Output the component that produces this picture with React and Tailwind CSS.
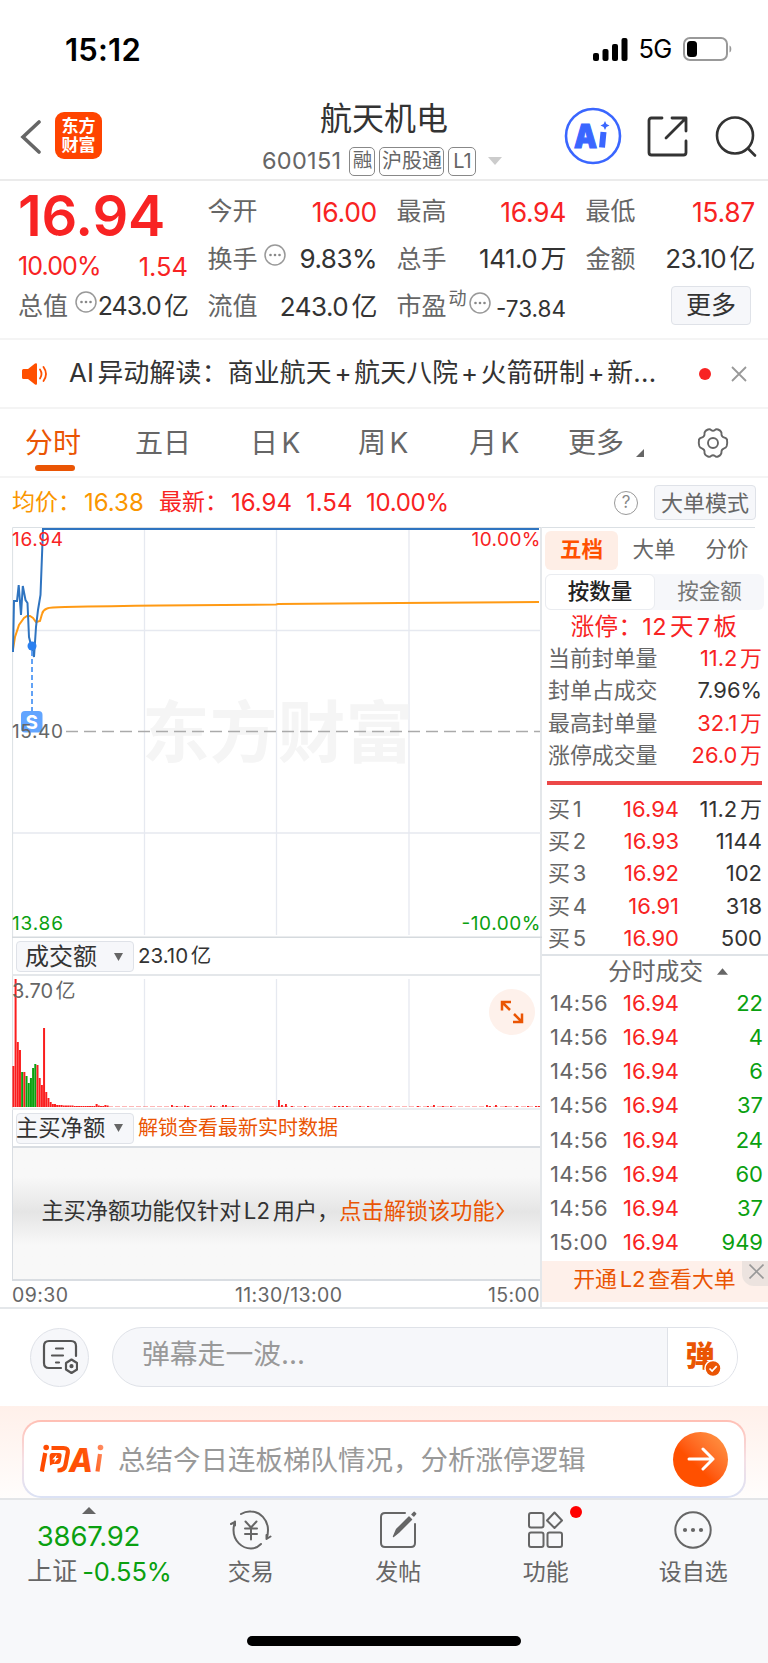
import React from "react";

const quoteColumns = [
    [
        { label: "今开", value: "16.00", red: true },
        { label: "换手", value: "9.83%", info: true },
        { label: "流值", value: "243.0亿" },
    ],
    [
        { label: "最高", value: "16.94", red: true },
        { label: "总手", value: "141.0万" },
        { label: "市盈", value: "-73.84", info: true, sup: "动" },
    ],
    [
        { label: "最低", value: "15.87", red: true },
        { label: "金额", value: "23.10亿" },
    ],
];

const limitStats = [
    { label: "当前封单量", value: "11.2万", red: true },
    { label: "封单占成交", value: "7.96%" },
    { label: "最高封单量", value: "32.1万", red: true },
    { label: "涨停成交量", value: "26.0万", red: true },
];

const bids = [
    { level: "买1", price: "16.94", qty: "11.2万" },
    { level: "买2", price: "16.93", qty: "1144" },
    { level: "买3", price: "16.92", qty: "102" },
    { level: "买4", price: "16.91", qty: "318" },
    { level: "买5", price: "16.90", qty: "500" },
];

const ticks = [
    { time: "14:56", qty: 22 },
    { time: "14:56", qty: 4 },
    { time: "14:56", qty: 6 },
    { time: "14:56", qty: 37 },
    { time: "14:56", qty: 24 },
    { time: "14:56", qty: 60 },
    { time: "14:56", qty: 37 },
    { time: "15:00", qty: 949 },
];

const newsTopics = ["AI异动解读：商业航天", "航天八院", "火箭研制", "新..."];

// opening minutes: [height, isDown]
const volumes = [
    [41], [128], [65], [57], [35, 1], [35], [31, 1], [24, 1], [29, 1], [39, 1], [43, 1],
    [42], [29], [22], [79], [15], [9], [5], [3], [3], [2], [2], [2], [1.5], [1.5],
    [1.5], [1.5], [1.5], [1], [1], [1], [1], [1], [1], [1], [1], [1], [1], [3], [1.5], [1], [1], [2], [1.5],
];

// small spikes during the rest of the session: [x, height]
const spikes = [
    [160, 2], [165, 1], [173, 1.5], [176, 1], [199, 1.5], [202, 1], [211, 2], [214, 2], [221, 1], [267, 7],
    [270, 2], [274, 3], [280, 1], [293, 1], [323, 1], [327, 1], [331, 1], [335, 1], [348, 1], [356, 1],
    [378, 1], [406, 1], [416, 1], [422, 2], [431, 1], [439, 1], [475, 2], [478, 1], [484, 2], [494, 1],
    [505, 1], [516, 1], [524, 1], [527, 1],
];

const Info = () => (
    <svg className="h-[22px] w-[22px] shrink-0" viewBox="0 0 22 22" fill="none">
        <circle cx="11" cy="11" r="10" stroke="#999" strokeWidth="1.5" />
        <circle cx="6.5" cy="11" r="1.3" fill="#888" />
        <circle cx="11" cy="11" r="1.3" fill="#888" />
        <circle cx="15.5" cy="11" r="1.3" fill="#888" />
    </svg>
);

const StatusBar = () => (
    <div className="flex h-[98px] items-center justify-between pl-[65px] pr-[35.5px]">
        <span className="text-[31px] font-semibold leading-none tracking-[0.2px] text-black">15:12</span>
        <div className="flex items-center">
            <svg className="h-[23px] w-[35px]" viewBox="0 0 35 23">
                <rect x="0" y="15" width="6" height="8" rx="2" />
                <rect x="9.5" y="11" width="6" height="12" rx="2" />
                <rect x="19" y="6" width="6" height="17" rx="2" />
                <rect x="28.5" y="0" width="6" height="23" rx="2" />
            </svg>
            <span className="ml-[11px] text-[25.5px] leading-none tracking-[-0.8px] text-black">5G</span>
            <svg className="ml-[11px] h-6 w-[50px]" viewBox="0 0 50 24" fill="none">
                <rect x="1" y="1" width="43" height="22" rx="6" stroke="#999" strokeWidth="2" />
                <rect x="4" y="4" width="10" height="16" rx="3.5" fill="#000" />
                <path d="M46.5 8.5c2.4.6 2.4 6.4 0 7z" fill="#999" />
            </svg>
        </div>
    </div>
);

const Header = () => (
    <div className="grid h-[83px] grid-cols-[248px_303px_217px] border-b-2 border-[#ebebeb]">
        <div className="flex pl-5 pt-3.5">
            <svg className="mt-2 h-[34px] w-[22px]" viewBox="0 0 22 34" fill="none">
                <path d="M19 2 3 17l16 15" stroke="#666" strokeWidth="3.6" strokeLinecap="round" />
            </svg>
            <div className="ml-[13px] flex h-[47px] w-[47px] flex-col items-center justify-center rounded-[9px] bg-[#ff4400] text-[17px] font-bold leading-[19px] text-white">
                <span>东方</span>
                <span>财富</span>
            </div>
        </div>
        <div className="flex flex-col pt-[3px]">
            <div className="w-[272px] text-center text-[32px] leading-9 text-[#333]">航天机电</div>
            <div className="mt-[9px] flex h-[30px] items-center gap-1 pl-3.5 text-[#666]">
                <span className="mr-1 text-[23.5px] tracking-[0.3px]">600151</span>
                <span className="flex h-[29px] w-[26px] items-center justify-center rounded-[5px] border-[1.5px] border-[#888] text-[19.5px]">融</span>
                <span className="flex h-[29px] w-[65px] items-center justify-center rounded-[5px] border-[1.5px] border-[#888] text-[20px]">沪股通</span>
                <span className="flex h-[29px] w-7 items-center justify-center rounded-[5px] border-[1.5px] border-[#888] text-[20px]">L1</span>
                <svg className="ml-2 h-2 w-3.5" viewBox="0 0 14 8">
                    <path d="M0 0h14L7 8z" fill="#ccc" />
                </svg>
            </div>
        </div>
        <div className="flex items-start pl-[13px] pt-[9px]">
            <svg className="h-[58px] w-[58px] shrink-0" viewBox="0 0 58 58" fill="none">
                <circle cx="29" cy="29" r="27" stroke="#3a66ff" strokeWidth="2.6" />
                <text x="10" y="41" fontFamily="Inter" fontSize="33" fontWeight="900" fill="#3a66ff" stroke="#3a66ff" strokeWidth="1.2" textLength="23" lengthAdjust="spacingAndGlyphs">A</text>
                <path d="m39.5 25-1.5 15.5" stroke="#3a66ff" strokeWidth="6" />
                <path d="m41 14 1.4 3.1 3.1 1.4-3.1 1.4L41 23l-1.4-3.1-3.1-1.4 3.1-1.4z" fill="#3a66ff" />
            </svg>
            <svg className="ml-[25px] mt-[9px] h-[41px] w-[41px] shrink-0" viewBox="0 0 41 41" fill="none" stroke="#333" strokeWidth="2.8" strokeLinecap="round" strokeLinejoin="round">
                <path d="M15 2H4.5Q2 2 2 4.5v32Q2 39 4.5 39h32q2.5 0 2.5-2.5V25" />
                <path d="M25 2h14v13M38.5 2.5 19 22" />
            </svg>
            <svg className="ml-[27px] mt-[9px] h-[42px] w-[42px] shrink-0" viewBox="0 0 42 42" fill="none" stroke="#333" strokeWidth="2.6" strokeLinecap="round">
                <circle cx="20" cy="19.5" r="18" />
                <path d="m33 32.5 7 7" />
            </svg>
        </div>
    </div>
);

const Quote = () => (
    <div className="flex h-[159px] border-b-2 border-[#f4f4f4] pl-[18px] text-[25px] leading-none">
        <div className="w-[170px]">
            <div className="h-[69px] pt-[7px] text-[56px] font-semibold tracking-[-0.2px] text-[#f82323]">16.94</div>
            <div className="flex h-[33px] items-center justify-between text-[#f82323]">
                <span className="tracking-[-0.9px]">10.00%</span>
                <span className="text-[25.5px]">1.54</span>
            </div>
            <div className="flex h-11 items-center justify-between whitespace-nowrap pt-0.5 text-[#333]">
                <span className="flex items-center text-[#666]">
                    总值
                    <span className="-mt-2 ml-[7px]">
                        <Info />
                    </span>
                </span>
                <span className="tracking-[-1px]">243.0亿</span>
            </div>
        </div>
        {quoteColumns.map((column, i) => (
            <div key={i} className="ml-[19.5px] w-[169.5px] pt-[7px]">
                {column.map(({ label, value, red, info, sup }) => (
                    <div key={label} className="flex h-[47.5px] items-center justify-between whitespace-nowrap">
                        <span className="flex items-center text-[#666]">
                            {label}
                            {sup && <span className="-mt-4 ml-0.5 text-[18px]">{sup}</span>}
                            {info && (
                                <span className={sup ? "-mt-2 ml-0.5" : "-mt-2 ml-1.5"}>
                                    <Info />
                                </span>
                            )}
                        </span>
                        <span
                            className={`${
                                sup
                                    ? "mt-1 text-[22.5px]"
                                    : red
                                      ? "text-[26.5px] tracking-[-0.3px]"
                                      : "text-[26px] tracking-[-0.5px]"
                            } ${red ? "text-[#f82323]" : "text-[#333]"}`}
                        >
                            {value}
                        </span>
                    </div>
                ))}
                {i === 2 && (
                    <div className="ml-auto mr-1 mt-[3px] flex h-[39px] w-20 items-center justify-center rounded-[4px] border-[1.5px] border-[#dfe2e8] bg-[#f6f7fa] text-[#333]">
                        更多
                    </div>
                )}
            </div>
        ))}
    </div>
);

const News = () => (
    <div className="flex h-[69px] items-center border-b-2 border-[#f4f4f4] pl-[22px]">
        <svg className="h-[22px] w-[26px]" viewBox="0 0 26 22" fill="none">
            <path d="M0 7.5Q0 6 1.5 6H6l7-5.5q2-1 2 1v19q0 2-2 1L6 16H1.5Q0 16 0 14.5z" fill="#ff5000" />
            <path d="M18 6.5q3 4.5 0 9M21.5 4q5 7 0 14" stroke="#ff5000" strokeWidth="1.8" strokeLinecap="round" />
        </svg>
        <span className="-mt-px ml-[21px] w-[589px] whitespace-nowrap text-[25.8px] leading-none tracking-[0.25px] text-[#333]">
            {newsTopics.map((topic, i) => (
                <React.Fragment key={topic}>
                    {i > 0 && <span className="mx-[2.5px]">+</span>}
                    {topic}
                </React.Fragment>
            ))}
        </span>
        <span className="ml-[41px] h-3 w-3 rounded-full bg-[#f82323]" />
        <svg className="ml-5 h-4 w-4" viewBox="0 0 16 16" stroke="#999" strokeWidth="1.8">
            <path d="m1 1 14 14M15 1 1 15" />
        </svg>
    </div>
);

const PeriodTabs = () => (
    <div className="flex h-[69px] items-center border-b-2 border-[#f4f4f4] pl-[25px] text-[28px] leading-none text-[#666]">
        <div className="relative w-[110px] text-[#ea5504]">
            分时
            <span className="absolute -bottom-3.5 left-2.5 h-1.5 w-10 rounded-full bg-[#ea5504]" />
        </div>
        <div className="w-[115px]">五日</div>
        <div className="w-[108px]">日K</div>
        <div className="w-[111px]">周K</div>
        <div className="w-[99px]">月K</div>
        <div className="flex w-[129px] items-center">
            更多
            <svg className="ml-3 mt-5 h-2 w-2" viewBox="0 0 8 8">
                <path d="M8 0v8H0z" fill="#666" />
            </svg>
        </div>
        <svg className="h-8 w-8" viewBox="0 0 32 32" fill="none" stroke="#666" strokeWidth="1.9" strokeLinejoin="round">
            <path d="M11 2.5q2-.8 3 .5 2 1.6 4 0 1-1.3 3-.5 4 1.5 3.500 5 .2 2.500 3 3.200 2.500.8 2.500 2.300.6 3-.3 6-.7 2-2.500 2.300-2.700.9-2.700 3.200.2 3.500-3.500 5-2 .8-3-.5-2-1.600-4 0-1 1.300-3 .5-4-1.500-3.500-5 0-2.300-2.700-3.200-1.800-.3-2.500-2.300-.9-3-.3-6 0-1.500 2.500-2.300 2.800-.7 3-3.200-.5-3.500 3.500-5z" />
            <circle cx="16" cy="16" r="5" />
        </svg>
    </div>
);

const Legend = () => (
    <div className="flex h-[49px] items-center px-3 text-[24px] leading-none">
        <span className="w-[72px] text-[23px] text-[#fa9600]">均价：</span>
        <span className="w-[75px] text-[#fa9600]">16.38</span>
        <span className="w-[72px] text-[23px] text-[#f82323]">最新：</span>
        <span className="w-[75px] text-[#f82323]">16.94</span>
        <span className="w-[60px] text-[#f82323]">1.54</span>
        <span className="tracking-[-0.3px] text-[#f82323]">10.00%</span>
        <span className="ml-auto flex h-6 w-6 items-center justify-center rounded-full border-[1.5px] border-[#999] text-[17px] text-[#888]">?</span>
        <span className="ml-4 flex h-[35px] w-[102px] items-center justify-center rounded-[4px] border-[1.5px] border-[#dfe2e8] bg-[#f6f7fa] text-[22px] text-[#666]">
            大单模式
        </span>
    </div>
);

const PriceChart = () => (
    <svg className="block h-[411px] w-[530px]" viewBox="12 527 530 411" fill="none" fontFamily="Inter, 'Noto Sans CJK SC', sans-serif">
        <g stroke="#e6e9f0" strokeWidth="1.3">
            <path d="M144.5 528v407M276.5 528v407M409 528v407M13 630.5h528M13 833h528" />
        </g>
        <text x="142" y="757" fontSize="67.5" fontWeight="700" fill="#f5f5f5" textLength="271">东方财富</text>
        <path d="M12.6 938V527.5H541" stroke="#dbe0e4" />
        <path d="M12 937.5h530" stroke="#d5dade" strokeWidth="2" />
        <path d="M66 731.5h474" stroke="#aaa" strokeWidth="1.7" strokeDasharray="12 6" />
        <path d="M13 649 15 637 19 625 24 618 27 616h3l3 2 3 4 4-1 2-7q1-4 5-5.5 3-1.3 18-1.5Q110 606 160 605.5L276 604.5 278 604 400 603 539 602" stroke="#ff9a14" strokeWidth="2" />
        <path d="M13 652 14 601h3l1.7-16 2.3 30 1.8-29 2.7 14 2 3 1.5 34 3 12 2 8 2-30 2-17L40.5 595 43 529H539" stroke="#2f74c0" strokeWidth="2" />
        <path d="M32 651v60" stroke="#5b9ef5" strokeWidth="1.9" strokeDasharray="5 3" />
        <circle cx="32" cy="646" r="4.5" fill="#2b80f0" />
        <rect x="21" y="711" width="21.5" height="21.5" rx="4" fill="#62a5ff" />
        <text x="31.7" y="728.5" fontSize="19" fontWeight="700" textAnchor="middle" fill="#fff">S</text>
        <g fontSize="19">
            <text x="12" y="546" fill="#f82323" textLength="51">16.94</text>
            <text x="540.5" y="546" fill="#f82323" textAnchor="end" textLength="69">10.00%</text>
            <text x="12" y="738" fill="#666" textLength="51">15.40</text>
            <text x="12" y="929.5" fill="#0aa010" textLength="51">13.86</text>
            <text x="540.5" y="929.5" fill="#0aa010" textAnchor="end" textLength="79">-10.00%</text>
        </g>
    </svg>
);

const IndicatorSelect = ({ name, tight }) => (
    <div
        className={`ml-[3px] flex h-[31px] w-[118px] items-center rounded-[4px] border-[1.5px] border-[#dfe2e8] bg-[#f6f7fa] leading-none text-[#333] ${
            tight ? "text-[22.3px]" : "pl-2 text-[24px]"
        }`}
    >
        <span className={tight ? "-ml-px" : ""}>{name}</span>
        <svg className="ml-auto mr-2.5 h-2 w-[9px]" viewBox="0 0 9 8">
            <path d="M0 0h9L4.500 8z" fill="#666" />
        </svg>
    </div>
);

const VolumeChart = () => (
    <div className="relative h-[134px] border-b-2 border-[#eceef1]">
        <svg className="block h-[132px] w-[530px]" viewBox="0 0 530 132">
            <path d="M132.5 3v128M264.5 3v128M397 3v128" stroke="#e6e9f0" strokeWidth="1.3" />
            <path d="M.6 0v132" stroke="#dbe0e4" />
            {volumes.map(([height, down], i) => (
                <rect key={i} x={0.4 + i * 2.19} y={131 - height} width="2" height={height} fill={down ? "#0aa010" : "#fa1e1e"} />
            ))}
            {spikes.map(([x, height]) => (
                <rect key={x} x={x - 1} y={131 - height} width="1.9" height={height} fill="#fa1e1e" />
            ))}
            <path d="M96 130.6h433" stroke="#fa1e1e" strokeWidth=".7" strokeDasharray="5 2" opacity=".5" />
        </svg>
        <span className="absolute left-0 top-1 text-[20px] leading-[22px] text-[#666]">3.70亿</span>
        <div className="absolute right-[5px] top-[13px] flex h-[46px] w-[46px] items-center justify-center rounded-full bg-[#fef1eb]">
            <svg className="h-6 w-6" viewBox="0 0 24 24" fill="none" stroke="#ea5504" strokeWidth="2.5">
                <path d="M11 2H2v8.500M2 2l8 8M13 22h9v-8.500M22 22l-8-8" />
            </svg>
        </div>
    </div>
);

const ChartColumn = () => (
    <div className="w-[542px] border-r-2 border-[#e4e7ea] pl-3">
        <PriceChart />
        <div className="flex h-[38px] items-center border-b-2 border-l border-[#e4e7ea] pt-px">
            <IndicatorSelect name="成交额" />
            <span className="ml-1 text-[20.5px] leading-none text-[#333]">23.10亿</span>
        </div>
        <VolumeChart />
        <div className="flex h-[38px] items-center border-b-2 border-l border-[#d9dde2]">
            <IndicatorSelect name="主买净额" tight />
            <span className="ml-1 text-[20px] leading-none text-[#ea5504]">解锁查看最新实时数据</span>
        </div>
        <div className="flex h-[133px] items-center justify-center whitespace-nowrap border-b-2 border-l border-[#d9dde2] bg-linear-to-b from-[#f8f8f8] from-22% via-[#e5e5e5] via-49% to-[#f8f8f8] to-74% pb-1 pr-[7px] text-[22.2px] leading-none">
            <span className="text-[#333]">主买净额功能仅针对L2用户，</span>
            <span className="flex items-center text-[#ea5504]">
                点击解锁该功能
                <svg className="h-[18px] w-2.5" viewBox="0 0 10 18" fill="none" stroke="#ea5504" strokeWidth="1.9">
                    <path d="m2 1 6 8-6 8" />
                </svg>
            </span>
        </div>
        <div className="flex h-[27px] items-center justify-between pt-[3px] text-[19.5px] leading-none tracking-[0.4px] text-[#666]">
            <span>09:30</span>
            <span className="ml-[21px]">11:30/13:00</span>
            <span>15:00</span>
        </div>
    </div>
);

const OrderBook = () => (
    <div className="flex w-[226px] flex-col leading-none text-[#666]">
        <div className="mr-[13px] border-t border-[#dbe0e4]" />
        <div className="ml-[3px] mt-[3px] flex h-[39px] items-center text-[21.5px]">
            <span className="flex h-full w-[73px] items-center justify-center rounded-md bg-[#feeee6] pb-px font-bold text-[#ff5000]">五档</span>
            <span className="w-[72px] pb-0.5 text-center">大单</span>
            <span className="w-[74px] pb-0.5 text-center">分价</span>
        </div>
        <div className="ml-[3px] mt-1 flex h-9 w-[219px] rounded-md bg-[#f6f7fa] text-[21.5px]">
            <span className="flex w-[110px] items-center justify-center rounded-md border-[1.5px] border-[#eaecf0] bg-white font-medium text-[#222]">按数量</span>
            <span className="flex flex-1 items-center justify-center text-[#777]">按金额</span>
        </div>
        <div className="mb-[2px] mt-0.5 flex h-[29px] items-center justify-center pr-0.5 text-[23.5px] tracking-[0.4px] text-[#f82323]">涨停：12天7板</div>
        {limitStats.map(({ label, value, red }) => (
            <div key={label} className="flex h-[32.2px] items-center justify-between pl-1.5 pr-1.5 text-[21.9px]">
                <span>{label}</span>
                <span className={red ? "text-[#f82323]" : "text-[#333]"}>{value}</span>
            </div>
        ))}
        <div className="ml-[5px] mr-1.5 mt-[9px] h-1 shrink-0 bg-[#ec4848]" />
        <div className="mt-2 h-[163px] shrink-0 border-b-2 border-[#dfe3e7]">
            {bids.map(({ level, price, qty }) => (
                <div key={level} className="flex h-[32.3px] items-center pl-1.5 pr-1.5 text-[22px]">
                    <span className="w-[56px]">{level}</span>
                    <span className="w-[75px] text-right text-[#f82323]">{price}</span>
                    <span className="flex-1 text-right text-[#333]">{qty}</span>
                </div>
            ))}
        </div>
        <div className="flex h-[30px] items-center justify-center pl-[26px] pt-0.5 text-[23.8px]">
            分时成交
            <svg className="ml-3.5 h-[7px] w-[11px]" viewBox="0 0 10 6">
                <path d="M5 0l5 6H0z" fill="#666" />
            </svg>
        </div>
        {ticks.map(({ time, qty }, i) => (
            <div key={i} className="flex h-[34.2px] items-center pl-2 pr-[5px] text-[22px]">
                <span className="w-[62px] tracking-[0.3px]">{time}</span>
                <span className="w-[67px] text-right text-[#f82323]">16.94</span>
                <span className="flex-1 text-right text-[#0aa010]">{qty}</span>
            </div>
        ))}
        <div className="relative mb-[5px] mt-auto flex h-[41px] shrink-0 items-center justify-center bg-[#fef0ea] pb-1 pr-px text-[21.9px] text-[#ea5504]">
            开通L2查看大单
            <span className="absolute right-0 top-0 flex h-[25px] w-[26px] items-center justify-center rounded-bl-xl bg-[#ece3df] pb-1 pl-[3px]">
                <svg className="h-[15px] w-[15px]" viewBox="0 0 14 14" stroke="#999" strokeWidth="1.5">
                    <path d="m.5.5 13 13M13.5.5l-13 13" />
                </svg>
            </span>
        </div>
    </div>
);

const CommentBar = () => (
    <div className="flex h-[99px] items-center border-t-2 border-[#e4e7ea] px-[30px] pb-px">
        <div className="flex h-[59px] w-[59px] items-center justify-center rounded-full border-[1.5px] border-[#dfe2e8] bg-[#f6f7fa]">
            <svg className="h-9 w-9" viewBox="0 0 36 36" fill="none" stroke="#555" strokeWidth="2.2" strokeLinecap="round">
                <path d="M34 17V7q0-5-5-5H7Q2 2 2 7v17q0 5 5 5h12" />
                <path d="M14 9.5h7M10 16.5h11M14 23.5h3" />
                <path d="M29.5 20.5 35 24v6.5L29.5 34 24 30.5V24z" strokeLinejoin="round" />
                <circle cx="29.5" cy="27.2" r="1" fill="#555" />
            </svg>
        </div>
        <div className="ml-[23px] flex h-[60px] flex-1 overflow-hidden rounded-full border-[1.5px] border-[#dfe2e8] bg-[#f6f7fa]">
            <span className="flex-1 pl-[29px] pt-[13px] text-[27.8px] leading-none text-[#999]">弹幕走一波...</span>
            <span className="flex w-[70px] items-center border-l-[1.5px] border-[#dfe2e8] bg-white pl-[17px]">
                <svg className="h-10 w-10 overflow-visible" viewBox="0 -6 40 40">
                    <text x="0.5" y="24" fontFamily="'Noto Sans CJK SC'" fontSize="29" fontWeight="900" fill="#ea5504">弹</text>
                    <circle cx="28" cy="25.5" r="8" fill="#ea5504" stroke="#fff" strokeWidth="1.5" />
                    <path d="m24.500 25.500 2.600 2.600 4.600-5" fill="none" stroke="#fff" strokeWidth="1.700" />
                </svg>
            </span>
        </div>
    </div>
);

const AskLogo = () => (
    <svg className="h-9 w-[68px] overflow-visible" viewBox="0 -2 68 36" fill="none">
        <defs>
            <linearGradient id="ask" x1="0" x2="65" y1="24" y2="4" gradientUnits="userSpaceOnUse">
                <stop stopColor="#ff4a00" />
                <stop offset=".7" stopColor="#ff5208" />
                <stop offset="1" stopColor="#ff9068" />
            </linearGradient>
        </defs>
        <g stroke="url(#ask)" strokeWidth="4.2" strokeLinejoin="round">
            <path d="M6.2 10 2.8 28.500" />
            <path d="M12.500 5h12q5 0 4.300 4.500L26.500 22q-1 5.500-8 5.500" />
            <path d="M61 11 58.500 28.500" />
        </g>
        <circle cx="7.200" cy="4.500" r="2.800" fill="url(#ask)" />
        <circle cx="61.500" cy="4.500" r="2.800" fill="url(#ask)" />
        <path d="M13 10h7q3 0 2.600 3l-.8 5q-.5 3-3.300 3H14l-3 1.500L10.500 13q.5-3 2.500-3z" fill="url(#ask)" />
        <path d="m17.800 11.500-4.500 5h2.700l-1 3.500 4.700-5h-2.900z" fill="#fff" />
        <text x="30" y="28.500" fontFamily="Inter" fontSize="33" fontWeight="800" fontStyle="italic" fill="url(#ask)" textLength="24" lengthAdjust="spacingAndGlyphs">A</text>
    </svg>
);

const AskBar = () => (
    <div className="h-[92px] bg-linear-to-b from-[#fff0ea] to-[#fffdfc] px-[22px] pt-3.5">
        <div className="h-[78px] rounded-[19px] bg-linear-to-b from-[#ffbfb4] via-[#f5dfe4] to-[#dbe2f5] p-[2px]">
            <div className="flex h-full items-center rounded-[17px] bg-white pl-[15px] pr-4">
                <AskLogo />
                <span className="ml-[11px] mt-[3px] whitespace-nowrap text-[27.5px] leading-none text-[#999]">总结今日连板梯队情况，分析涨停逻辑</span>
                <span className="ml-auto flex h-[55px] w-[55px] items-center justify-center rounded-full bg-linear-to-tr from-[#ff5000] from-40% to-[#ff9a48]">
                    <svg className="h-7 w-7" viewBox="0 0 28 28" fill="none" stroke="#fff" strokeWidth="3" strokeLinecap="round" strokeLinejoin="round">
                        <path d="M2 14h24M16 4l10 10-10 10" />
                    </svg>
                </span>
            </div>
        </div>
    </div>
);

const NavItem = ({ label, dot, children }) => (
    <div className="flex w-[147.5px] flex-col items-center">
        <div className="relative mt-2">
            <svg className="h-11 w-11" viewBox="0 0 44 44" fill="none" stroke="#666" strokeWidth="2" strokeLinecap="round" strokeLinejoin="round">
                {children}
            </svg>
            {dot && <span className="absolute -right-[14px] -top-[2px] h-3 w-3 rounded-full bg-[#ff0000]" />}
        </div>
        <span className="mt-[9px] text-[23px] leading-none">{label}</span>
    </div>
);

const BottomNav = () => (
    <div className="flex h-[165px] flex-col border-t-2 border-[#e3e5e8] bg-[#f7f8fa] text-[#666]">
        <div className="flex">
            <div className="flex w-[177px] flex-col items-center leading-none">
                <svg className="mt-[7px] h-[7px] w-3.5" viewBox="0 0 14 7">
                    <path d="M7 0l7 7H0z" fill="#666" />
                </svg>
                <span className="mt-[9px] text-[27.5px] tracking-[-0.2px] text-[#0aa010]">3867.92</span>
                <span className="mt-2 flex pl-[22px] text-[25px]">
                    上证<span className="ml-[5px] text-[25.5px] tracking-[-0.1px] text-[#0aa010]">-0.55%</span>
                </span>
            </div>
            <NavItem label="交易">
                <path d="M12 6Q17 3 22 3.5c9 0 17 8 17 18.5q0 5-1.5 9l4-2.5M37.5 31V27M32 36q-4.5 4.5-10 4.5C13 40.5 4.5 33 4.5 22q0-4 1.5-8L2 16M6 13.5v4" />
                <path d="m16.5 13.5 5.5 6 5.5-6M22 19.5v12M16 20.5h12M16 26h12" />
            </NavItem>
            <NavItem label="发帖">
                <path d="M29 5H9Q5 5 5 9v26q0 4 4 4h26q4 0 4-4V16" />
                <path d="m17.5 28.5 3-7L33 9l2.5 2.5-13 13zM36 6.5l2.2-2.2 1.500 1.500L37.800 8z" fill="#666" strokeWidth="1.4" />
            </NavItem>
            <NavItem label="功能" dot>
                <rect x="5" y="5" width="14.5" height="14.5" rx="2" />
                <path d="M30.5 4.500 38 12.500l-7.500 7.500-7.500-7.500z" />
                <rect x="5" y="24.5" width="14.5" height="14.5" rx="2" />
                <rect x="23.5" y="24.5" width="14.5" height="14.5" rx="2" />
            </NavItem>
            <NavItem label="设自选">
                <circle cx="22" cy="22" r="17.7" />
                <g fill="#666" stroke="none">
                    <circle cx="14" cy="22" r="2.1" />
                    <circle cx="22" cy="22" r="2.1" />
                    <circle cx="30" cy="22" r="2.1" />
                </g>
            </NavItem>
        </div>
        <div className="mx-auto mb-[17px] mt-auto h-2.5 w-[274px] rounded-full bg-black" />
    </div>
);

export default function App() {
    return (
        <div className="h-[1663px] w-[768px] overflow-hidden bg-white font-[Inter,'Noto_Sans_CJK_SC',sans-serif] [text-autospace:normal]">
            <StatusBar />
            <Header />
            <Quote />
            <News />
            <PeriodTabs />
            <Legend />
            <div className="flex h-[780px]">
                <ChartColumn />
                <OrderBook />
            </div>
            <CommentBar />
            <AskBar />
            <BottomNav />
        </div>
    );
}
